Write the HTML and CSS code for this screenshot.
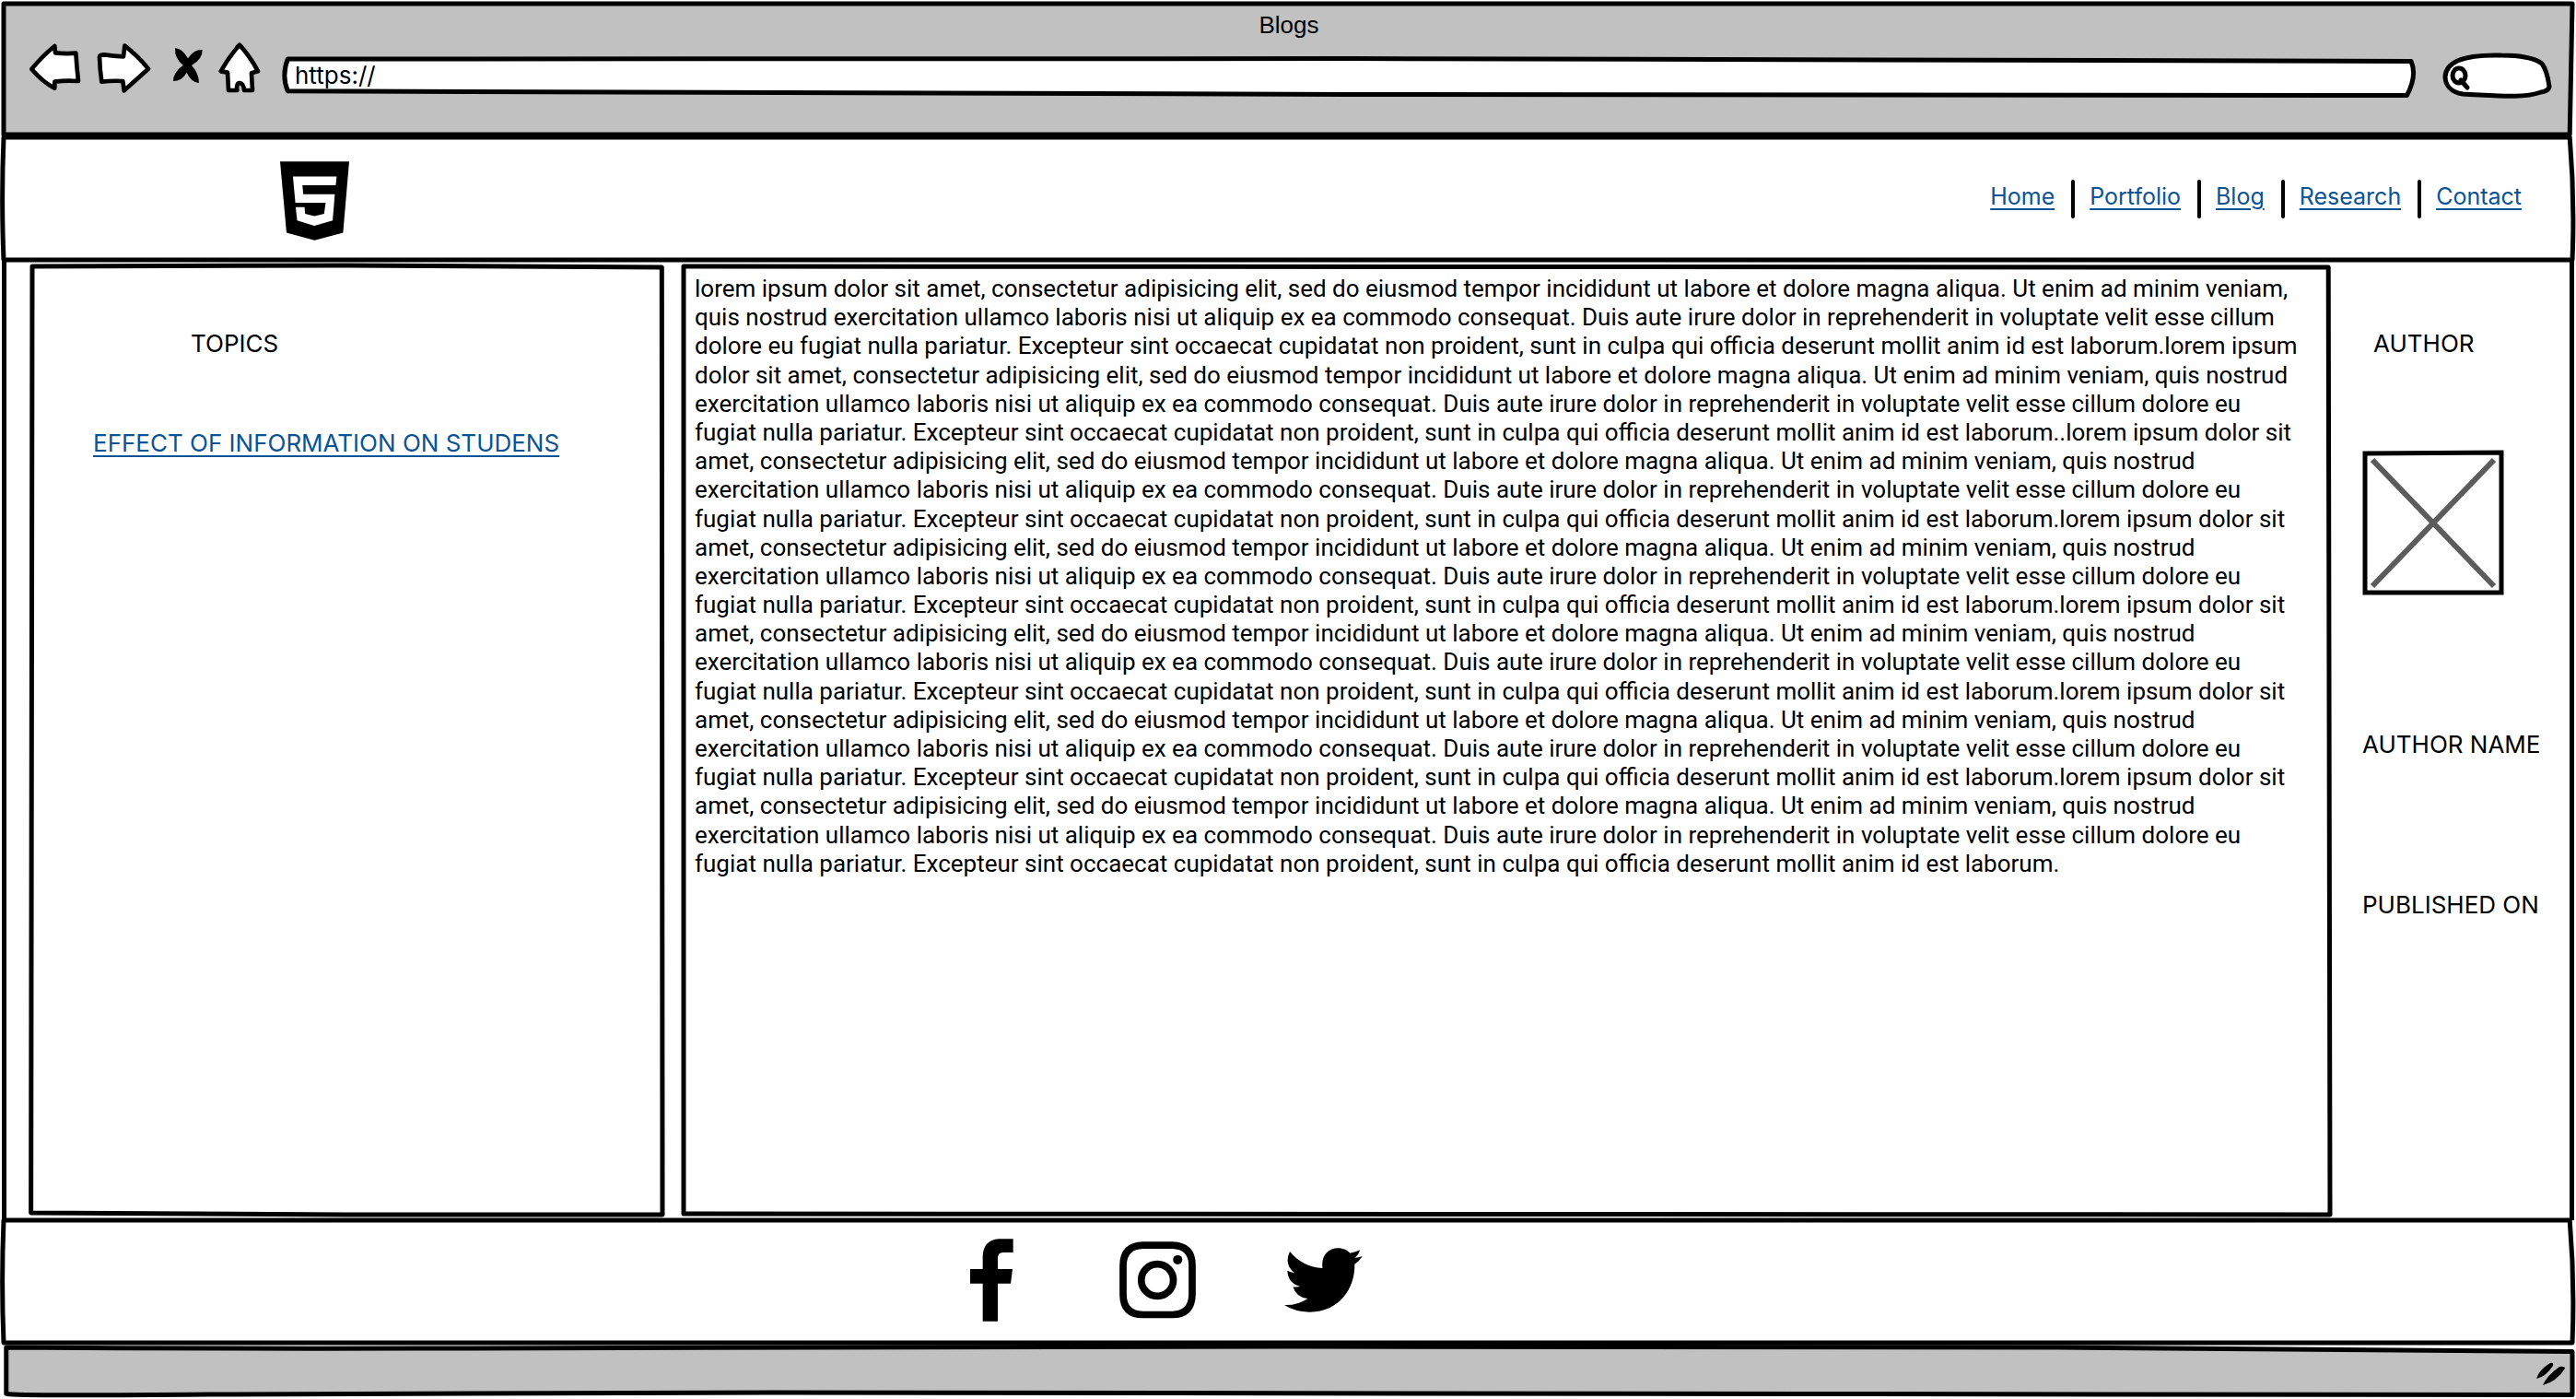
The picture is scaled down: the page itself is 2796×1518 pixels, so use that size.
FILE: index.html
```html
<!DOCTYPE html>
<html lang="en">
<head>
<meta charset="utf-8">
<meta name="viewport" content="width=device-width, initial-scale=1">
<title>Blogs</title>
<link rel="stylesheet" href="styles.css">
</head>
<body>
<div class="chrome">
  <svg class="outline" viewBox="0 0 100 100" preserveAspectRatio="none" aria-hidden="true"><path d="M0 0H100L99.9 100H0Z"/></svg>
  <div class="window-title">Blogs</div>
  <form class="toolbar">
    <button class="tool" type="button" aria-label="Back"><svg width="60" height="56" viewBox="90 138 180 168"><path class="shape" d="M103 225Q140 180 178 150L180 172Q215 176 247 173Q250 220 255 264Q215 261 178 266L178 287Q140 268 103 225Z"/></svg></button>
    <button class="tool" type="button" aria-label="Forward"><svg width="60" height="56" viewBox="312 138 180 168"><path class="shape" d="M324 184Q325 178 340 178Q370 182 402 184L406 149Q450 183 483 224L404 295L400 264Q365 262 331 266Q325 225 324 184Z"/></svg></button>
    <button class="tool" type="button" aria-label="Stop"><svg width="44" height="56" viewBox="534 138 132 168"><path d="M570 157Q592 156 612 190Q632 160 659 162Q660 192 624 213Q648 240 648 270Q622 268 608 236Q592 264 564 264Q564 236 596 212Q568 190 570 157Z"/></svg></button>
    <button class="tool" type="button" aria-label="Home"><svg width="50" height="56" viewBox="708 138 150 168"><path class="shape" d="M780 146Q815 185 840 232L819 238L822 294L795 294Q793 271 780 270Q769 271 772 294L744 294L741 236L719 232Q745 185 780 146Z"/></svg></button>
    <div class="address">
      <svg class="outline" viewBox="0 0 100 100" preserveAspectRatio="none" aria-hidden="true"><path d="M.1 0L50 -1L100 6Q100.3 45 99.8 99L50 96L.1 87Q-.2 45 .1 0Z"/></svg>
      <input class="address-input" type="text" aria-label="Address" value="https://">
    </div>
    <div class="search">
      <svg class="outline" viewBox="0 0 115 46" aria-hidden="true"><path d="M1 25C2 8 25 1 62 2C85 2 98 5 106 11C112 19 113 30 114 36Q113 41 105 42C85 49 60 46 20 44C8 42 1 35 1 25Z"/><ellipse cx="16" cy="24" rx="7" ry="8"/><path d="M18 29L25 37"/></svg>
      <input class="search-input" type="search" aria-label="Search">
    </div>
  </form>
</div>

<header class="site-header">
  <svg class="outline" viewBox="0 0 100 100" preserveAspectRatio="none" aria-hidden="true"><path d="M0 0H99.9Q100.1 50 100 100H0Q-.1 50 0 0Z"/></svg>
  <svg class="logo" width="75" height="86" viewBox="912 525 226 258" role="img" aria-label="HTML5"><path fill-rule="evenodd" d="M912 525H1138L1118 758L1025 783L933 758ZM954 574L962 660H1061L1056 696L1024 704L994 696L992 674H963L968 718L1024 735L1084 718L1091 632H988L985 603H1094L1097 574Z"/></svg>
  <nav>
    <ul class="nav">
      <li><a href="#">Home</a></li>
      <li><a href="#">Portfolio</a></li>
      <li><a href="#">Blog</a></li>
      <li><a href="#">Research</a></li>
      <li><a href="#">Contact</a></li>
    </ul>
  </nav>
</header>

<main class="content">
  <section class="panel topics">
    <svg class="outline" viewBox="0 0 100 100" preserveAspectRatio="none" aria-hidden="true"><path d="M0 0L50 -.1L99.9 .1L100 100L50 100L-.2 99.8Z"/></svg>
    <h2>TOPICS</h2>
    <a href="#">EFFECT OF INFORMATION ON STUDENS</a>
  </section>
  <article class="panel post">
    <svg class="outline" viewBox="0 0 100 100" preserveAspectRatio="none" aria-hidden="true"><path d="M0 0L99.9 .1L100 100L0 99.9Z"/></svg>
    <p>lorem ipsum dolor sit amet, consectetur adipisicing elit, sed do eiusmod tempor incididunt ut labore et dolore magna aliqua. Ut enim ad minim veniam,<br>
    quis nostrud exercitation ullamco laboris nisi ut aliquip ex ea commodo consequat. Duis aute irure dolor in reprehenderit in voluptate velit esse cillum<br>
    dolore eu fugiat nulla pariatur. Excepteur sint occaecat cupidatat non proident, sunt in culpa qui officia deserunt mollit anim id est laborum.lorem ipsum<br>
    dolor sit amet, consectetur adipisicing elit, sed do eiusmod tempor incididunt ut labore et dolore magna aliqua. Ut enim ad minim veniam, quis nostrud<br>
    exercitation ullamco laboris nisi ut aliquip ex ea commodo consequat. Duis aute irure dolor in reprehenderit in voluptate velit esse cillum dolore eu<br>
    fugiat nulla pariatur. Excepteur sint occaecat cupidatat non proident, sunt in culpa qui officia deserunt mollit anim id est laborum..lorem ipsum dolor sit<br>
    amet, consectetur adipisicing elit, sed do eiusmod tempor incididunt ut labore et dolore magna aliqua. Ut enim ad minim veniam, quis nostrud<br>
    exercitation ullamco laboris nisi ut aliquip ex ea commodo consequat. Duis aute irure dolor in reprehenderit in voluptate velit esse cillum dolore eu<br>
    fugiat nulla pariatur. Excepteur sint occaecat cupidatat non proident, sunt in culpa qui officia deserunt mollit anim id est laborum.lorem ipsum dolor sit<br>
    amet, consectetur adipisicing elit, sed do eiusmod tempor incididunt ut labore et dolore magna aliqua. Ut enim ad minim veniam, quis nostrud<br>
    exercitation ullamco laboris nisi ut aliquip ex ea commodo consequat. Duis aute irure dolor in reprehenderit in voluptate velit esse cillum dolore eu<br>
    fugiat nulla pariatur. Excepteur sint occaecat cupidatat non proident, sunt in culpa qui officia deserunt mollit anim id est laborum.lorem ipsum dolor sit<br>
    amet, consectetur adipisicing elit, sed do eiusmod tempor incididunt ut labore et dolore magna aliqua. Ut enim ad minim veniam, quis nostrud<br>
    exercitation ullamco laboris nisi ut aliquip ex ea commodo consequat. Duis aute irure dolor in reprehenderit in voluptate velit esse cillum dolore eu<br>
    fugiat nulla pariatur. Excepteur sint occaecat cupidatat non proident, sunt in culpa qui officia deserunt mollit anim id est laborum.lorem ipsum dolor sit<br>
    amet, consectetur adipisicing elit, sed do eiusmod tempor incididunt ut labore et dolore magna aliqua. Ut enim ad minim veniam, quis nostrud<br>
    exercitation ullamco laboris nisi ut aliquip ex ea commodo consequat. Duis aute irure dolor in reprehenderit in voluptate velit esse cillum dolore eu<br>
    fugiat nulla pariatur. Excepteur sint occaecat cupidatat non proident, sunt in culpa qui officia deserunt mollit anim id est laborum.lorem ipsum dolor sit<br>
    amet, consectetur adipisicing elit, sed do eiusmod tempor incididunt ut labore et dolore magna aliqua. Ut enim ad minim veniam, quis nostrud<br>
    exercitation ullamco laboris nisi ut aliquip ex ea commodo consequat. Duis aute irure dolor in reprehenderit in voluptate velit esse cillum dolore eu<br>
    fugiat nulla pariatur. Excepteur sint occaecat cupidatat non proident, sunt in culpa qui officia deserunt mollit anim id est laborum.</p>
  </article>
  <aside class="author">
    <h2>AUTHOR</h2>
    <svg class="portrait" width="154" height="158" viewBox="0 0 154 158" role="img" aria-label="Author picture"><path class="cross" d="M11 11L143 148M143 11L11 148"/><path class="frame" d="M3 4L151 3V155H3Z"/></svg>
    <p>AUTHOR NAME</p>
    <p>PUBLISHED ON</p>
  </aside>
</main>

<footer class="site-footer">
  <svg class="outline" viewBox="0 0 100 100" preserveAspectRatio="none" aria-hidden="true"><path d="M0 0H99.9Q100.1 50 100 100H0Q-.1 50 0 0Z"/></svg>
  <a href="#" aria-label="Facebook"><svg width="47" height="90" viewBox="159 133 141 270"><path d="M299 134V178H266Q249 178 249 196V232H297L291 279H249V402H200V279H159V232H200V190Q202 138 252 134Z"/></svg></a>
  <a href="#" aria-label="Instagram"><svg width="83" height="84" viewBox="642 153 248 250"><path class="ring" d="M718 165H814Q878 167 878 230V326Q876 389 814 390H718Q655 389 654 326V230Q655 167 718 165Z"/><circle class="ring" cx="765" cy="278" r="52"/><circle cx="831" cy="212" r="15"/></svg></a>
  <a href="#" aria-label="Twitter"><svg width="85" height="70" viewBox="1180 173 254 209"><path d="M1198 185C1226 220 1262 236 1304 239C1298 200 1322 174 1354 174C1372 174 1384 181 1393 190Q1410 188 1426 180Q1421 196 1409 205Q1421 205 1433 200Q1424 216 1408 226C1410 300 1362 381 1262 381Q1214 380 1180 358Q1222 360 1256 337Q1219 334 1208 299Q1219 301 1231 298Q1192 288 1190 247Q1200 253 1213 254Q1178 226 1198 185Z"/></svg></a>
</footer>

<div class="status">
  <svg class="outline" viewBox="0 0 100 100" preserveAspectRatio="none" aria-hidden="true"><path d="M.1 0Q8 3 16 2L50 -2L80 0L100 9V101L70 99L30 96Q16 96 8 100T.1 98Z"/></svg>
  <svg class="grip" width="32" height="26" viewBox="0 0 32 26" aria-hidden="true"><path d="M0 18Q3 8 15 1Q19 0 18 4Q10 16 0 18ZM7 25Q11 15 25 5Q31 4 31 7Q22 21 7 25Z"/></svg>
</div>
</body>
</html>
```
FILE: styles.css
```css
* {
  box-sizing: border-box;
}

body {
  display: flex;
  flex-direction: column;
  min-height: 100vh;
  margin: 0;
  padding: 4px 4px 5px;
  background: #fff;
  color: #000;
  font: 26px/31px Inter, sans-serif;
}

a {
  color: #0b5394;
  text-decoration-thickness: 2px;
  text-underline-offset: 4px;
}

h2,
p {
  margin: 0;
  font-size: inherit;
  font-weight: 400;
}

svg {
  display: block;
  flex: none;
}

/* Pen line drawn round a box, stretched to the box's size */
.outline {
  position: absolute;
  inset: 0;
  width: 100%;
  height: 100%;
  overflow: visible;
  pointer-events: none;
}

.outline * {
  fill: #fff;
  stroke: #000;
  stroke-width: 5px;
  stroke-linejoin: round;
  stroke-linecap: round;
  vector-effect: non-scaling-stroke;
}

.chrome,
.site-header,
.site-footer,
.status,
.panel,
.address,
.search {
  position: relative;
  isolation: isolate;
}

.chrome .outline,
.site-header .outline,
.site-footer .outline,
.status .outline,
.panel .outline {
  z-index: -1;
}

/* Browser bar */
.chrome {
  padding: 8px 24px 42px 26px;
}

.chrome > .outline path,
.status > .outline path {
  fill: #c1c1c1;
}

.window-title {
  font-family: "Liberation Sans", sans-serif;
  text-align: center;
}

.toolbar {
  display: flex;
  align-items: flex-end;
  gap: 14px;
  min-height: 58px;
  margin-top: 3px;
}

.tool {
  align-self: flex-start;
  padding: 0;
  border: 0;
  background: none;
}

.shape {
  fill: #fff;
  stroke: #000;
  stroke-width: 14px;
  stroke-linejoin: round;
}

.address {
  flex: 1;
  height: 40px;
  margin: 0 22px 0 10px;
}

.search {
  width: 115px;
  height: 46px;
}

.address-input,
.search-input {
  display: block;
  width: 100%;
  height: 34px;
  padding: 0 10px;
  border: 0;
  outline: 0;
  background: none;
  font: inherit;
}

.search-input {
  height: 46px;
  padding-left: 32px;
}

/* Site header */
.site-header {
  display: flex;
  align-items: center;
  justify-content: space-between;
  min-height: 133px;
  margin-top: 3px;
  padding: 0 55px 0 300px;
}

.logo {
  margin-top: 5px;
}

.nav {
  display: flex;
  gap: 18px;
  margin: 0;
  padding: 0;
  list-style: none;
  font-size: 25px;
  line-height: 37px;
}

.nav li {
  display: flex;
  gap: 16px;
}

.nav li + li::before {
  content: "";
  width: 4px;
  height: 42px;
  border-radius: 2px;
  background: #000;
}

/* Main area */
.content {
  flex: 1;
  display: grid;
  grid-template-columns: minmax(0, 684fr) minmax(0, 1787fr) 237px;
  column-gap: 23px;
  margin: 0 -2px;
  padding: 7px 0 6px 28px;
  border: solid #000;
  border-width: 0 5px;
}

.topics {
  padding: 68px 66px;
}

.topics h2 {
  margin: 0 0 77px 106px;
}

.post {
  padding: 9px 12px;
  font: 500 26px/1.2 Roboto, sans-serif;
}

.author {
  padding: 68px 0 0 12px;
}

.author h2 {
  padding-left: 12px;
}

.portrait {
  margin: 100px 0 146px;
}

.portrait path {
  fill: none;
  stroke: #000;
  stroke-width: 5px;
}

.portrait .cross {
  stroke: #5c5c5c;
  stroke-width: 6px;
}

.author p + p {
  margin-top: 143px;
}

/* Footer */
.site-footer {
  display: flex;
  align-items: center;
  gap: 90px;
  min-height: 133px;
  padding: 0 0 3px 1027px;
}

.site-footer a {
  display: flex;
  justify-content: center;
  width: 90px;
}

.ring {
  fill: none;
  stroke: #000;
  stroke-width: 23px;
}

.status {
  display: flex;
  align-items: center;
  justify-content: flex-end;
  min-height: 51px;
  margin-top: 5px;
  padding: 6px 7px 0 0;
}
```
